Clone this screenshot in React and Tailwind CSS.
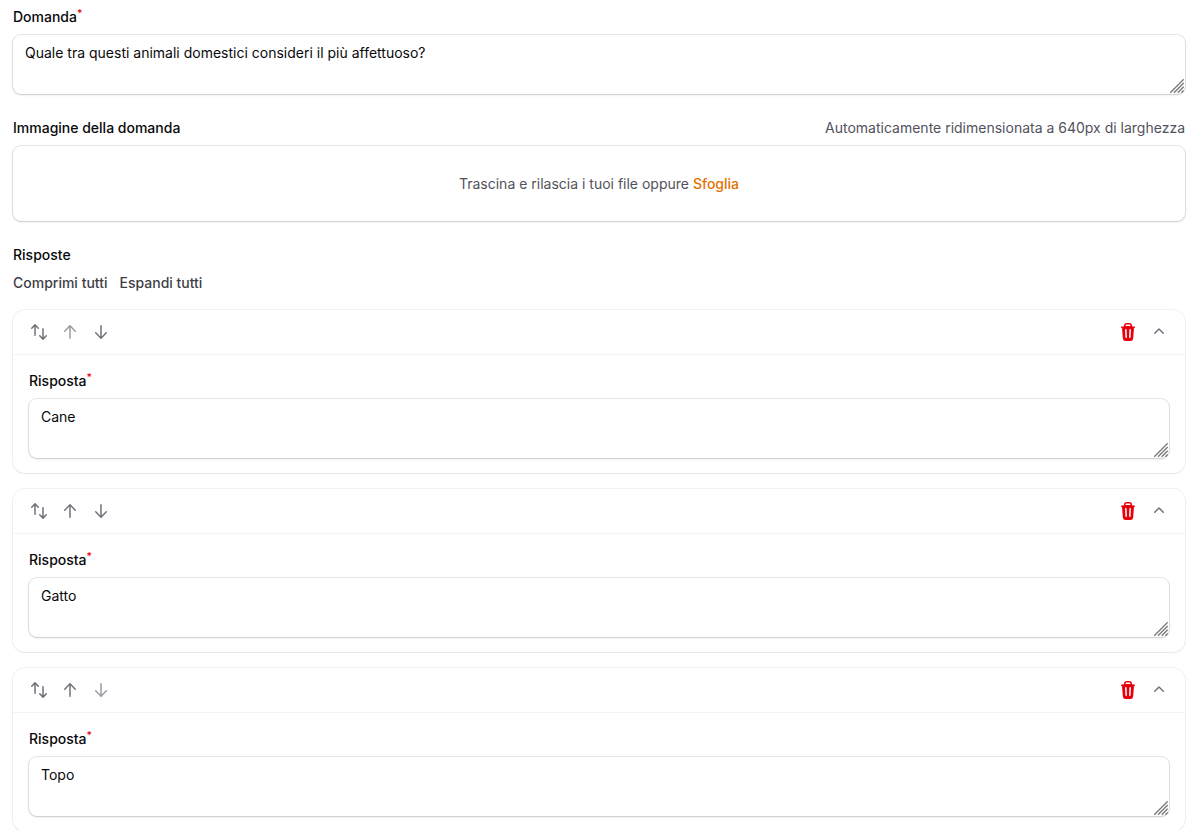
import { useState } from "react";
import {
    HiMiniArrowDown,
    HiMiniArrowsUpDown,
    HiMiniArrowUp,
    HiMiniChevronUp,
    HiMiniTrash,
} from "react-icons/hi2";

const Label = ({ htmlFor, required, children }) => (
    <label
        htmlFor={htmlFor}
        className="block text-sm leading-6 font-medium text-zinc-950"
    >
        {children}
        {required && <sup className="font-medium text-red-600">*</sup>}
    </label>
);

const TextArea = ({ id, value, onChange }) => (
    <div className="relative mt-1.5 rounded-lg bg-white shadow-sm ring-1 ring-zinc-950/10">
        <textarea
            id={id}
            value={value}
            onChange={(e) => onChange(e.target.value)}
            className="block h-[59px] w-full resize-none rounded-lg px-3 py-1.5 text-sm leading-6 text-zinc-950 outline-none"
        />
        {/* Resize grip */}
        <svg
            viewBox="0 0 15 15"
            className="pointer-events-none absolute right-0 bottom-0 size-[15px]"
            fill="none"
            stroke="#777"
            strokeWidth="1.3"
        >
            <path d="M0.3 13.7L13.7 0.3M4 13.7L13.7 4M7.7 13.7L13.7 7.7M11.4 13.7L13.7 11.4" />
        </svg>
    </div>
);

const IconButton = ({ label, className = "", children, ...props }) => (
    <button
        type="button"
        aria-label={label}
        className={`size-5 disabled:opacity-70 ${className}`}
        {...props}
    >
        {children}
    </button>
);

const AnswerCard = ({
    answer,
    isFirst,
    isLast,
    onChange,
    onMove,
    onDelete,
    onToggle,
}) => {
    const id = `answer-${answer.id}`;

    return (
        <li className="rounded-xl bg-white shadow-xs ring-1 ring-zinc-950/5">
            <div className="flex h-11 items-center justify-between px-4">
                <div className="flex items-center gap-[11px] text-zinc-500">
                    <IconButton label="Sposta" className="cursor-move">
                        <HiMiniArrowsUpDown className="size-5" />
                    </IconButton>
                    <IconButton
                        label="Sposta su"
                        disabled={isFirst}
                        onClick={() => onMove(-1)}
                    >
                        <HiMiniArrowUp className="size-5" />
                    </IconButton>
                    <IconButton
                        label="Sposta giù"
                        disabled={isLast}
                        onClick={() => onMove(1)}
                    >
                        <HiMiniArrowDown className="size-5" />
                    </IconButton>
                </div>
                <div className="flex items-center gap-[11px]">
                    <IconButton
                        label="Elimina"
                        className="text-red-600"
                        onClick={onDelete}
                    >
                        <HiMiniTrash className="size-5" />
                    </IconButton>
                    <IconButton
                        label="Comprimi"
                        className="text-zinc-500"
                        onClick={onToggle}
                    >
                        <HiMiniChevronUp
                            className={
                                answer.open ? "size-5" : "size-5 rotate-180"
                            }
                        />
                    </IconButton>
                </div>
            </div>
            {answer.open && (
                <div className="border-t border-zinc-100 px-4 pt-[14px] pb-[15px]">
                    <Label htmlFor={id} required>
                        Risposta
                    </Label>
                    <TextArea id={id} value={answer.text} onChange={onChange} />
                </div>
            )}
        </li>
    );
};

const App = () => {
    const [question, setQuestion] = useState(
        "Quale tra questi animali domestici consideri il più affettuoso?"
    );
    const [answers, setAnswers] = useState([
        { id: 1, text: "Cane", open: true },
        { id: 2, text: "Gatto", open: true },
        { id: 3, text: "Topo", open: true },
    ]);

    const update = (id, values) => {
        setAnswers((prev) =>
            prev.map((a) => (a.id === id ? { ...a, ...values } : a))
        );
    };

    const setAllOpen = (open) => {
        setAnswers((prev) => prev.map((a) => ({ ...a, open })));
    };

    const move = (index, step) => {
        setAnswers((prev) => {
            const next = [...prev];
            [next[index], next[index + step]] = [
                next[index + step],
                next[index],
            ];
            return next;
        });
    };

    return (
        <form className="bg-white pt-[5px] pr-[15px] pb-4 pl-[13px] font-['Inter',sans-serif] text-sm">
            <div>
                <Label htmlFor="question" required>
                    Domanda
                </Label>
                <TextArea
                    id="question"
                    value={question}
                    onChange={setQuestion}
                />
            </div>

            <div className="mt-[22px]">
                <div className="flex items-center justify-between">
                    <Label htmlFor="image">Immagine della domanda</Label>
                    <span className="leading-6 text-zinc-600">
                        Automaticamente ridimensionata a 640px di larghezza
                    </span>
                </div>
                <div className="mt-1.5 flex h-[75px] items-center justify-center rounded-lg bg-white shadow-sm ring-1 ring-zinc-950/10">
                    <label htmlFor="image" className="text-zinc-600">
                        Trascina e rilascia i tuoi file oppure{" "}
                        <span className="cursor-pointer font-medium text-amber-600">
                            Sfoglia
                        </span>
                    </label>
                    <input id="image" type="file" className="sr-only" />
                </div>
            </div>

            <div className="mt-[22px]">
                <h2 className="leading-6 font-medium text-zinc-950">
                    Risposte
                </h2>
                <div className="mt-1 flex gap-3 leading-6 font-medium text-zinc-700">
                    <button type="button" onClick={() => setAllOpen(false)}>
                        Comprimi tutti
                    </button>
                    <button type="button" onClick={() => setAllOpen(true)}>
                        Espandi tutti
                    </button>
                </div>
                <ul className="mt-[15px] flex flex-col gap-4">
                    {answers.map((answer, index) => (
                        <AnswerCard
                            key={answer.id}
                            answer={answer}
                            isFirst={index === 0}
                            isLast={index === answers.length - 1}
                            onChange={(text) => update(answer.id, { text })}
                            onMove={(step) => move(index, step)}
                            onDelete={() =>
                                setAnswers((prev) =>
                                    prev.filter((a) => a.id !== answer.id)
                                )
                            }
                            onToggle={() =>
                                update(answer.id, { open: !answer.open })
                            }
                        />
                    ))}
                </ul>
            </div>
        </form>
    );
};

export default App;
